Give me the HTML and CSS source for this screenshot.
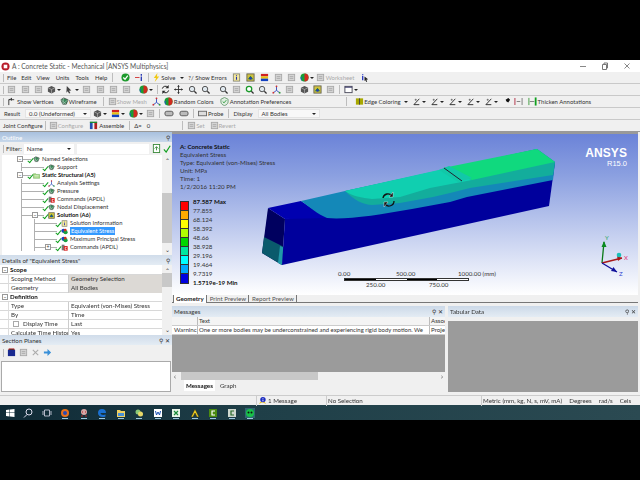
FILE: index.html
```html
<!DOCTYPE html>
<html lang="en">
<head>
<meta charset="utf-8">
<title>A : Concrete Static - Mechanical [ANSYS Multiphysics]</title>
<link rel="stylesheet" href="styles.css">
</head>
<body>
<svg class="defs" width="0" height="0">
  <symbol id="check" viewBox="0 0 10 10"><circle cx="5" cy="5" r="4.500" fill="#1c9a2c"/><path d="M2.500 5l2 2 3-4" stroke="#fff" stroke-width="1.400" fill="none"/></symbol>
  <symbol id="cube" viewBox="0 0 10 10"><path d="M5 1l4 2v4.500l-4 2-4-2V3z" fill="#555"/><path d="M1 3l4 2 4-2M5 5v4.500" stroke="#ccc" stroke-width=".6" fill="none"/></symbol>
  <symbol id="gray" viewBox="0 0 10 10"><rect x="1.500" y="1.500" width="7" height="7" fill="#d4d4d4" stroke="#a8a8a8"/><path d="M3 4h4M3 6h4" stroke="#999" stroke-width=".7"/></symbol>
  <symbol id="mag" viewBox="0 0 10 10"><circle cx="4.500" cy="4.500" r="3" fill="#dfe8ee" stroke="#444"/><path d="M7 7l2.500 2.500" stroke="#333" stroke-width="1.400"/></symbol>
  <symbol id="magg" viewBox="0 0 10 10"><circle cx="4.500" cy="4.500" r="3" fill="#fff" stroke="#1a9a2a" stroke-width="1.400"/><path d="M7 7l2.500 2.500" stroke="#333" stroke-width="1.400"/></symbol>
  <symbol id="rot" viewBox="0 0 10 10"><path d="M1.500 4a3.500 3.500 0 0 1 6-1.500M8.500 6a3.500 3.500 0 0 1-6 1.500" stroke="#222" stroke-width="1.100" fill="none"/><path d="M8.500 0v3.500H5M1.500 10V6.500H5" fill="#222"/></symbol>
  <symbol id="move" viewBox="0 0 10 10"><path d="M5 .5v9M.5 5h9" stroke="#333"/><path d="M5 0l1.500 2h-3zM5 10l1.500-2h-3zM0 5l2-1.500v3zM10 5l-2-1.500v3z" fill="#333"/></symbol>
  <symbol id="color" viewBox="0 0 10 10"><path d="M1 1h8v2.700H1z" fill="#d02020"/><path d="M1 3.700h8v2.600H1z" fill="#e8c010"/><path d="M1 6.300h8V9H1z" fill="#1040c0"/></symbol>
  <symbol id="ball" viewBox="0 0 10 10"><circle cx="5" cy="5" r="4.500" fill="#18a030"/><path d="M5 .5a4.500 4.500 0 0 1 0 9z" fill="#d02a20"/><path d="M5 3a2 2 0 0 0 0 6.500A4.500 4.500 0 0 1 .6 5z" fill="#2050d0"/></symbol>
  <symbol id="edge" viewBox="0 0 10 10"><path d="M1 8.500L7 2M1 8.500h6" stroke="#222" fill="none"/><circle cx="3" cy="3" r="1.100" fill="#777"/></symbol>
  <symbol id="mesh" viewBox="0 0 10 10"><path d="M1 3l3-2 5 2-2 5H3z" fill="#3a8a5a" stroke="#222" stroke-width=".6"/><path d="M4 1l-1 7M1 3l6 5M9 3L3 8" stroke="#ddd" stroke-width=".5"/></symbol>
  <symbol id="star" viewBox="0 0 10 10"><path d="M5 1v5M5 6L1 9M5 6l4 3" stroke="#2a4ac0"/><circle cx="5" cy="1.500" r="1" fill="#d03030"/><circle cx="1.500" cy="8.500" r="1" fill="#d03030"/><circle cx="8.500" cy="8.500" r="1" fill="#2a9a30"/></symbol>
  <symbol id="tree-ok" viewBox="0 0 10 10"><path d="M1 6l2.500 3L8 2" stroke="#12a020" stroke-width="1.300" fill="none"/></symbol>
  <symbol id="sol" viewBox="0 0 10 10"><rect x="1" y="1" width="8" height="8" fill="#d0c040" stroke="#665"/><path d="M2 7l3-4 3 4z" fill="#208030"/><circle cx="5" cy="6" r="1.500" fill="#2040b0"/></symbol>
  <symbol id="folder" viewBox="0 0 10 10"><path d="M.5 2.500h3.500l1 1h4.500V9H.500z" fill="#a6d884" stroke="#5a9a40" stroke-width=".6"/><path d="M2 5h6M2 7h6" stroke="#fff" stroke-width=".6"/></symbol>
  <symbol id="cmd" viewBox="0 0 10 10"><rect x="1" y="1" width="4" height="8" fill="#777"/><rect x="4" y="3" width="5.500" height="6.500" fill="#d81818"/><path d="M8 5H6v3h2" stroke="#fff" fill="none"/></symbol>
  <symbol id="stress" viewBox="0 0 10 10"><circle cx="3.500" cy="4" r="3" fill="#1840c0"/><circle cx="6.500" cy="6" r="3" fill="#18a040"/><circle cx="6" cy="3" r="2" fill="#d03020"/></symbol>
  <symbol id="info" viewBox="0 0 10 10"><rect x="1.500" y="1" width="7" height="8" fill="#f4e89a" stroke="#887"/><path d="M5 2.500v1M5 4.500v3" stroke="#2030b0" stroke-width="1.200"/></symbol>
</svg>

<div class="screen">
  <div class="bar-black top"></div>
  <div class="window">
    <header class="titlebar">
      <svg class="app" viewBox="0 0 10 10"><circle cx="5" cy="5" r="4.500" fill="#b81c2a"/><path d="M3 3h4v4H3z" fill="#fff"/></svg>
      <span class="title">A : Concrete Static - Mechanical [ANSYS Multiphysics]</span>
      <span class="winbtns">
        <svg viewBox="0 0 8 8"><path d="M1 4.500h6" stroke="#888"/></svg>
        <svg viewBox="0 0 8 8"><path d="M1.500 2.500h4v5h-4zM3 2.500V1h3.500v5H5.500" stroke="#777" fill="none"/></svg>
        <svg viewBox="0 0 8 8"><path d="M1.500 1.500l5 5M6.500 1.500l-5 5" stroke="#888"/></svg>
      </span>
    </header>

    <div class="row menu">
      <span class="grip"></span>
      <span class="t m3">File</span><span class="t m5">Edit</span><span class="t m5">View</span><span class="t m6">Units</span><span class="t m6">Tools</span><span class="t m6">Help</span>
      <span class="sep m5"></span>
      <svg class="i m8"><use href="#check"/></svg>
      <svg class="i m5" viewBox="0 0 10 10"><path d="M0 5h5" stroke="#d03030"/><path d="M7 1v2M7 4v5" stroke="#2030b0" stroke-width="1.400"/></svg>
      <span class="sep m4"></span>
      <svg class="i m3" viewBox="0 0 10 10"><path d="M6 0L2 5.500h2.500L3 10l5-6H5.500z" fill="#f0c814"/></svg>
      <span class="t">Solve</span><span class="caret m5"></span>
      <span class="t m4">?/ Show Errors</span>
      <svg class="i m5"><use href="#info"/></svg>
      <svg class="i m5"><use href="#sol"/></svg>
      <svg class="i m5"><use href="#color"/></svg>
      <svg class="i m5"><use href="#gray"/></svg>
      <svg class="i m4"><use href="#gray"/></svg>
      <svg class="i m4"><use href="#ball"/></svg><span class="caret m1"></span>
      <svg class="i m2"><use href="#gray"/></svg>
      <span class="t dim m1">Worksheet</span>
      <svg class="i m6" viewBox="0 0 10 10"><path d="M3 1v1M3 3v5" stroke="#2030c0" stroke-width="1.400"/><path d="M5 4l4 3-2 .5 1 2-1 .5-1-2-1 1z" fill="#222"/></svg>
    </div>

    <div class="row">
      <span class="grip"></span>
      <svg class="i m3"><use href="#gray"/></svg><svg class="i m5"><use href="#gray"/></svg><svg class="i m4"><use href="#gray"/></svg>
      <svg class="i m4"><use href="#cube"/></svg><span class="caret m1"></span>
      <svg class="i m4" viewBox="0 0 10 10"><path d="M2 1l5 5-2.500.5L6 9l-1.500.5L3 7 1.500 8.500z" fill="#444"/></svg><span class="caret m1"></span>
      <svg class="i m3"><use href="#gray"/></svg><svg class="i m5"><use href="#gray"/></svg><svg class="i m4"><use href="#gray"/></svg><svg class="i m4"><use href="#gray"/></svg>
      <svg class="i m8"><use href="#ball"/></svg><span class="caret m1"></span>
      <span class="sep m4"></span>
      <svg class="i m3"><use href="#rot"/></svg><svg class="i m4"><use href="#move"/></svg><svg class="i m5"><use href="#mag"/></svg><svg class="i m4"><use href="#mag"/></svg>
      <svg class="i m9"><use href="#mag"/></svg><svg class="i m4"><use href="#gray"/></svg><svg class="i m4"><use href="#magg"/></svg><svg class="i m4"><use href="#mag"/></svg><svg class="i m5"><use href="#star"/></svg><svg class="i m4"><use href="#gray"/></svg><svg class="i m6"><use href="#cube"/></svg><svg class="i m4"><use href="#sol"/></svg><svg class="i m4"><use href="#gray"/></svg>
      <span class="sep m4"></span>
      <svg class="i m4" viewBox="0 0 10 10"><rect x="1" y="1.500" width="8" height="7" fill="#fff" stroke="#445"/><path d="M1 2.500h8" stroke="#336"/></svg><span class="caret m1"></span>
    </div>

    <div class="row">
      <span class="grip"></span>
      <svg class="i m3" viewBox="0 0 10 10"><path d="M2 9V3h6M2 3l3-1M5 1v3" stroke="#333" fill="none"/></svg><span class="t m1">Show Vertices</span>
      <svg class="i m6"><use href="#mesh"/></svg><span class="t">Wireframe</span>
      <span class="sep m6"></span>
      <svg class="i m4"><use href="#gray"/></svg><span class="t dim">Show Mesh</span>
      <svg class="i m5"><use href="#star"/></svg>
      <svg class="i m3"><use href="#ball"/></svg><span class="t m1">Random Colors</span>
      <svg class="i m6" viewBox="0 0 10 10"><path d="M5 .5l4 2v3c0 2-2 3.500-4 4-2-.5-4-2-4-4v-3z" fill="#dfeee0" stroke="#6a9a70"/><path d="M3 5l1.500 1.500L7 3.500" stroke="#2a9a3a" fill="none"/></svg><span class="t m1">Annotation Preferences</span>
      <span class="sep sep-far"></span>
      <svg class="i m4" viewBox="0 0 10 10"><path d="M1 1.500h8v7H1z" fill="#a8a800"/><path d="M5 1.500v7" stroke="#444"/></svg><span class="t">Edge Coloring</span><span class="caret m3"></span>
      <svg class="i m5"><use href="#edge"/></svg><span class="caret"></span>
      <svg class="i m5"><use href="#edge"/></svg><span class="caret"></span>
      <svg class="i m5"><use href="#edge"/></svg><span class="caret"></span>
      <svg class="i m5"><use href="#edge"/></svg><span class="caret"></span>
      <svg class="i m5"><use href="#edge"/></svg><span class="caret"></span>
      <svg class="i m4" viewBox="0 0 10 10"><path d="M1 9l4-4-1-2 3-2 2 2-2 3-2-1-4 4z" fill="#111"/></svg>
      <svg class="i m3" viewBox="0 0 10 10"><path d="M1 1v8" stroke="#c06070" stroke-width="1.400"/><path d="M9 1v8" stroke="#999" stroke-width="1.400"/><path d="M3 5h4" stroke="#777"/></svg>
      <svg class="i m5" viewBox="0 0 10 10"><path d="M1 1v8" stroke="#3a9a3a"/><path d="M8.500 .5v9" stroke="#10a020" stroke-width="2"/><path d="M2 5h5" stroke="#777"/></svg><span class="t m1">Thicken Annotations</span>
    </div>

    <div class="row">
      <span class="t m4">Result</span>
      <span class="select m5 sel-result"><span class="t">0.0 (Undeformed)</span><span class="caret"></span></span>
      <svg class="i m2"><use href="#cube"/></svg><span class="caret m1"></span>
      <svg class="i m4"><use href="#color"/></svg><span class="caret m1"></span>
      <svg class="i m4"><use href="#ball"/></svg><span class="caret m1"></span>
      <svg class="i m3"><use href="#gray"/></svg>
      <span class="sep m4"></span>
      <svg class="i wide m4" viewBox="0 0 10 10"><rect x=".5" y="2.500" width="9" height="5" rx="2" fill="#bbb" stroke="#555"/></svg>
      <svg class="i wide m5" viewBox="0 0 10 10"><rect x=".5" y="2.500" width="9" height="5" rx="2" fill="#bbb" stroke="#555"/></svg>
      <span class="sep m4"></span>
      <svg class="i m4" viewBox="0 0 10 10"><rect x=".5" y="2.500" width="9" height="5" fill="#ddd" stroke="#666"/></svg><span class="t m1">Probe</span>
      <span class="sep m5"></span>
      <span class="t m4">Display</span>
      <span class="select m5 sel-display"><span class="t">All Bodies</span><span class="caret"></span></span>
    </div>

    <div class="row last">
      <span class="t m3">Joint Configure</span>
      <span class="sep m2"></span>
      <svg class="i m3"><use href="#gray"/></svg><span class="t dim">Configure</span>
      <svg class="i m6" viewBox="0 0 10 10"><rect x="1" y="1" width="3" height="8" fill="#2050b0"/><rect x="6" y="1" width="3" height="8" fill="#b02020"/><path d="M1 1.500h8" stroke="#1a8a30" stroke-width="1.500"/></svg><span class="t m1">Assemble</span>
      <span class="sep m5"></span>
      <span class="t m4">Δ=</span><span class="t m5">0</span>
      <span class="sep sep-joint"></span>
      <svg class="i m4"><use href="#gray"/></svg><span class="t dim">Set</span>
      <svg class="i m5"><use href="#gray"/></svg><span class="t dim">Revert</span>
    </div>

    <main class="workspace">
      <aside class="left">
        <div class="panelhead outlinehead"><span>Outline</span><span class="pin">⚲</span></div>
        <div class="filter">
          <span class="t fl">Filter:</span>
          <span class="select sel-filter"><span class="t">Name</span><span class="caret"></span></span>
          <span class="filterinput"></span>
          <svg class="i m3" viewBox="0 0 10 10"><rect x="1.500" y=".5" width="7" height="9" fill="#fff" stroke="#3a8a3a"/><path d="M3 5l2-2 2 2M5 3v4" stroke="#3a8a3a" fill="none"/></svg>
          <svg class="i m2"><use href="#tree-ok"/></svg>
        </div>
        <div class="treewrap">
          <ul class="tree">
            <li class="node"><span class="exp">−</span><svg class="ti"><use href="#mesh"/></svg><span class="t">Named Selections</span></li>
            <li><ul>
              <li class="node"><svg class="ti"><use href="#mesh"/></svg><span class="t">Support</span></li>
            </ul></li>
            <li class="node"><span class="exp">−</span><svg class="ti"><use href="#folder"/></svg><span class="t b">Static Structural (A5)</span></li>
            <li><ul>
              <li class="node"><svg class="ti"><use href="#star"/></svg><span class="t">Analysis Settings</span></li>
              <li class="node"><svg class="ti"><use href="#mesh"/></svg><span class="t">Pressure</span></li>
              <li class="node"><svg class="ti"><use href="#cmd"/></svg><span class="t">Commands (APDL)</span></li>
              <li class="node"><svg class="ti"><use href="#mesh"/></svg><span class="t">Nodal Displacement</span></li>
              <li class="node"><span class="exp">−</span><svg class="ti"><use href="#sol"/></svg><span class="t b">Solution (A6)</span></li>
              <li><ul>
                <li class="node"><svg class="ti"><use href="#info"/></svg><span class="t">Solution Information</span></li>
                <li class="node"><svg class="ti"><use href="#stress"/></svg><span class="t sel">Equivalent Stress</span></li>
                <li class="node"><svg class="ti"><use href="#stress"/></svg><span class="t">Maximum Principal Stress</span></li>
                <li class="node"><span class="exp">+</span><svg class="ti"><use href="#cmd"/></svg><span class="t">Commands (APDL)</span></li>
              </ul></li>
            </ul></li>
          </ul>
          <div class="scroll"><span class="up">⌃</span><span class="thumb outline-thumb"></span><span class="dn">⌄</span></div>
        </div>

        <div class="panelhead"><span>Details of "Equivalent Stress"</span><span class="pin">⚲</span></div>
        <div class="detailswrap">
          <div class="details">
            <div class="dr group"><span class="exp">−</span><span class="t b">Scope</span></div>
            <div class="dr"><span class="k t">Scoping Method</span><span class="v t shade">Geometry Selection</span></div>
            <div class="dr"><span class="k t">Geometry</span><span class="v t shade">All Bodies</span></div>
            <div class="dr group"><span class="exp">−</span><span class="t b">Definition</span></div>
            <div class="dr"><span class="k t">Type</span><span class="v t">Equivalent (von-Mises) Stress</span></div>
            <div class="dr"><span class="k t">By</span><span class="v t">Time</span></div>
            <div class="dr"><span class="k t"><span class="box"></span>Display Time</span><span class="v t">Last</span></div>
            <div class="dr"><span class="k t">Calculate Time History</span><span class="v t">Yes</span></div>
          </div>
          <div class="scroll"><span class="up">⌃</span><span class="thumb details-thumb"></span><span class="dn">⌄</span></div>
        </div>

        <div class="panelhead"><span>Section Planes</span><span class="pin">⚲ ✕</span></div>
        <div class="sectiontools">
          <span class="grip"></span>
          <svg class="i m3" viewBox="0 0 10 10"><rect x="1" y="2" width="8" height="7" fill="#1a2a90"/><path d="M2 2V1h6v1" stroke="#c03030"/></svg>
          <svg class="i m3"><use href="#gray"/></svg>
          <svg class="i m3" viewBox="0 0 10 10"><path d="M2 2l6 6M8 2l-6 6" stroke="#aaa" stroke-width="1.200"/></svg>
          <svg class="i m3" viewBox="0 0 10 10"><path d="M1 4h4V1l4 4-4 4V6H1z" fill="#3a90d8"/></svg>
        </div>
        <div class="sectionlist"></div>
      </aside>

      <section class="right">
        <div class="viewport">
          <svg class="model" viewBox="172 132 466 163">
            <polygon points="268,208 285,219 282,265 262,253" fill="#00005f"/>
            <polygon points="264,237 284,247 282,265 262,253" fill="#0a5a6c"/>
            <polygon points="280,246 285,248 282,265 278,263" fill="#2098a8"/>
            <polygon points="285,219 555,162 549,206 282,265" fill="#00009c"/>
            <polygon points="268,208 301,201 319,213 327,218 285,219" fill="#0000b0"/>
            <path d="M301 201L345 191L443 170L537 149L555 162L553 180L467 197L450 202L412 209C379 215 345 220 327 218C317 214 310 207 301 201Z" fill="#1488b8"/>
            <path d="M345 191L537 149L555 162L553 175L470 188L450 193L433 197L400 203L372 205C364 205 354 200 345 191Z" fill="#13ad9c"/>
            <path d="M345 191L443 169L472 180L430 188L400 197L372 199C362 198 352 196 345 191Z" fill="#10cfb0"/>
            <polygon points="443,168 537,149 555,162 472,180" fill="#10d97e"/>
            <polygon points="439,170 449,166 472,178 458,182" fill="#12c8a8"/>
            <path d="M444 168L462 181" stroke="#223" stroke-width="1"/>
            <g fill="none" stroke-width="1.300">
              <path d="M383 198a5 5 0 0 1 9-2" stroke="#111"/>
              <path d="M394 201a5 5 0 0 1-9 3" stroke="#111"/>
            </g>
            <path d="M393 192v5h-4zM384 207v-5h4z" fill="#111" stroke="#fff" stroke-width=".4"/>
            <path d="M602 263L604 242" stroke="#0a7a18" stroke-width="1.300"/><path d="M604 241l-2.500 6h5z" fill="#0a8a20"/>
            <path d="M602 263L622 258" stroke="#a81818" stroke-width="1.300"/><path d="M622 258l-5-2 1 5z" fill="#a81818"/>
            <path d="M602 263L617 272" stroke="#10109a" stroke-width="1.300"/><path d="M617 272l-6-1 2.500-4z" fill="#10109a"/>
            <circle cx="619" cy="255" r="2.300" fill="#18c0b8"/>
          </svg>
          <div class="vtext">
            <div class="t b">A: Concrete Static</div>
            <div class="t">Equivalent Stress</div>
            <div class="t">Type: Equivalent (von-Mises) Stress</div>
            <div class="t">Unit: MPa</div>
            <div class="t">Time: 1</div>
            <div class="t">1/2/2016 11:20 PM</div>
          </div>
          <div class="legend">
            <div class="lr"><i class="c1"></i></div>
            <div class="lr"><i class="c2"></i></div>
            <div class="lr"><i class="c3"></i></div>
            <div class="lr"><i class="c4"></i></div>
            <div class="lr"><i class="c5"></i></div>
            <div class="lr"><i class="c6"></i></div>
            <div class="lr"><i class="c7"></i></div>
            <div class="lr"><i class="c8"></i></div>
            <div class="lr"><i class="c9"></i></div>
          </div>
          <div class="labels">
            <div class="t b">87.587 Max</div><div class="t">77.855</div><div class="t">68.124</div><div class="t">58.392</div><div class="t">48.66</div><div class="t">38.928</div><div class="t">29.196</div><div class="t">19.464</div><div class="t">9.7319</div><div class="t b">1.5719e-19 Min</div>
          </div>
          <div class="brand"><div class="ansys">ANSYS</div><div class="rel">R15.0</div></div>
          <div class="scalebar">
            <div class="st"><span class="t s0">0.00</span><span class="t s500">500.00</span><span class="t s1000">1000.00 (mm)</span></div>
            <div class="sb"><i></i><b></b><i></i><b></b></div>
            <div class="st"><span class="t s250">250.00</span><span class="t s750">750.00</span></div>
          </div>
          <span class="axis ay">Y</span><span class="axis ax">X</span><span class="axis az">Z</span>
        </div>
        <div class="vtabs"><span class="vt on t">Geometry</span><span class="vt t">Print Preview</span><span class="vt t">Report Preview</span></div>
        <div class="lower">
          <div class="messages">
            <div class="panelhead mh"><span>Messages</span><span class="pin">⚲ ✕</span></div>
            <div class="mt head"><span class="c0"></span><span class="c-text t">Text</span><span class="c-assoc t">Assoc</span></div>
            <div class="mt"><span class="c0 t">Warninc</span><span class="c-text t">One or more bodies may be underconstrained and experiencing rigid body motion. We</span><span class="c-assoc t">Proje</span></div>
            <div class="grayarea"></div>
            <div class="hscroll"><span class="hl">‹</span><span class="hthumb"></span><span class="hr">›</span></div>
            <div class="mtabs"><span class="mtab on t">Messages</span><span class="mtab t">Graph</span></div>
          </div>
          <div class="tabular">
            <div class="panelhead mh"><span>Tabular Data</span><span class="pin">⚲ ✕</span></div>
            <div class="tabspace"></div>
            <div class="grayarea"></div>
          </div>
        </div>
      </section>
    </main>

    <footer class="status">
      <span class="cell c-a"></span>
      <span class="cell c-b"><svg class="i" viewBox="0 0 10 10"><path d="M1 9l4-2 4 2-2-3H3z" fill="#e8c020"/><circle cx="5.500" cy="4" r="3" fill="#1a2ac0"/><path d="M5.500 2.500v.8M5.500 4v2" stroke="#fff"/></svg><span class="t">1 Message</span></span>
      <span class="cell c-c t">No Selection</span>
      <span class="cell c-d"><span class="t">Metric (mm, kg, N, s, mV, mA)</span><span class="t">Degrees</span><span class="t">rad/s</span><span class="t">Cels</span></span>
    </footer>
  </div>

  <nav class="taskbar">
    <svg class="tb" viewBox="0 0 10 10"><path d="M1 2l3.500-.5v3H1zM5 1.400L9.500 1v3.500H5zM1 5h3.500v3.500L1 8zM5 5h4.500v4L5 8.600z" fill="#fff"/></svg>
    <svg class="tb" viewBox="0 0 10 10"><circle cx="6" cy="4" r="3" fill="none" stroke="#dde"/><path d="M4 6.500L1 9.500" stroke="#dde"/></svg>
    <svg class="tb" viewBox="0 0 10 10"><path d="M2.500 2h5v6h-5zM1 3v4M9 3v4" stroke="#dde" fill="none" stroke-width=".8"/></svg>
    <svg class="tb on" viewBox="0 0 10 10"><circle cx="5" cy="5" r="4" fill="#e8701a"/><circle cx="5" cy="5" r="2" fill="#2a4ab0"/></svg>
    <svg class="tb on" viewBox="0 0 10 10"><circle cx="5" cy="4" r="3" fill="#d8a8a8"/><path d="M3 4h1M6 4h1M3 7v2M7 7v2" stroke="#b02020"/></svg>
    <svg class="tb on" viewBox="0 0 10 10"><path d="M1 5a4 4 0 0 1 8 0H3.500c0 2 3 2.500 5 1.500V8.500C5 10 1 8.500 1 5z" fill="#1a70d0"/></svg>
    <svg class="tb on" viewBox="0 0 10 10"><path d="M1 2h3l1 1h4v6H1z" fill="#f0d060"/><path d="M2 5h6v3H2z" fill="#4a90d8"/></svg>
    <svg class="tb on" viewBox="0 0 10 10"><circle cx="4" cy="4" r="2.500" fill="#8ac878"/><circle cx="6.500" cy="6" r="2.500" fill="#e8d868"/></svg>
    <svg class="tb on" viewBox="0 0 10 10"><rect x="1" y="1" width="8" height="8" fill="#fff"/><path d="M2.500 3l1 4L5 4l1.500 3 1-4" stroke="#1a50b0" fill="none"/></svg>
    <svg class="tb on" viewBox="0 0 10 10"><rect x="1" y="1" width="8" height="8" fill="#e8f4e8"/><path d="M3 3l4 4M7 3L3 7" stroke="#1a8a3a" stroke-width="1.200"/></svg>
    <svg class="tb on" viewBox="0 0 10 10"><path d="M5 1L1 9h2l2-4 2 4h2z" fill="#f0d020" stroke="#111" stroke-width=".4"/></svg>
    <svg class="tb on" viewBox="0 0 10 10"><rect x="1" y="1" width="8" height="8" fill="#4a8a10"/><path d="M7 3H4v4h3" stroke="#fff" fill="none" stroke-width="1.200"/></svg>
    <svg class="tb on" viewBox="0 0 10 10"><rect x="1" y="1" width="8" height="8" fill="#cfd8cf"/><path d="M7 3H4v4h3" stroke="#2a6a2a" fill="none" stroke-width="1.200"/></svg>
    <svg class="tb on active" viewBox="0 0 10 10"><circle cx="5" cy="5" r="4" fill="#18c048"/><circle cx="3.500" cy="4.500" r="1" fill="#111"/><circle cx="6.500" cy="4.500" r="1" fill="#111"/></svg>
  </nav>
  <div class="bar-black bottom"></div>
</div>
</body>
</html>
```

FILE: styles.css
```css
* { box-sizing: border-box; }
html, body { margin: 0; padding: 0; background: #000; overflow: hidden; }
ul { list-style: none; margin: 0; padding: 0; }
.defs { position: absolute; }
.screen { width: 640px; height: 480px; display: flex; flex-direction: column; font-family: Lato, "Liberation Sans", sans-serif; font-size: 6.2px; color: #333; }
.t { white-space: nowrap; line-height: 8px; }
.b { font-weight: 700; color: #111; }
.dim { color: #aaa; }
.bar-black { background: #000; flex: none; }
.top { height: 60px; }
.bottom { height: 60px; }
.window { height: 345px; background: #f0f0f0; display: flex; flex-direction: column; filter: blur(.35px); }

.titlebar { height: 12px; background: #fff; display: flex; align-items: center; padding-left: 1px; }
.app { width: 9px; height: 9px; }
.title { margin-left: 2px; font-size: 6.6px; color: #555; white-space: nowrap; }
.winbtns { margin-left: auto; display: flex; gap: 14px; padding-right: 9px; }
.winbtns svg { width: 8px; height: 8px; }

.row { height: 12px; display: flex; align-items: center; border-bottom: 1px solid #c9c9c9; background: #f0f0f0; flex: none; font-size: 5.95px; }
.row.last { border-bottom: 1px solid #999; }
.grip { width: 1px; height: 8px; background: #bbb; margin-left: 3px; flex: none; }
.i { width: 9px; height: 9px; flex: none; }
.i.wide { width: 10px; }
.sep { width: 1px; height: 9px; background: #bdbdbd; flex: none; }
.sep-far { margin-left: 55px; margin-right: 4px; }
.sep-joint { margin-left: 32px; }
.caret { width: 0; height: 0; border-left: 2px solid transparent; border-right: 2px solid transparent; border-top: 2px solid #222; flex: none; }
.m1 { margin-left: 1px; } .m2 { margin-left: 2px; } .m3 { margin-left: 3px; } .m4 { margin-left: 4px; }
.m5 { margin-left: 5px; } .m6 { margin-left: 6px; } .m8 { margin-left: 8px; } .m9 { margin-left: 9px; }

.select { height: 9px; display: flex; align-items: center; justify-content: space-between; padding: 0 3px; flex: none; }
.sel-result { width: 66px; background: #f8f8f8; border: 1px solid #e4e4e4; }
.sel-display { width: 62px; background: #f8f8f8; border: 1px solid #e4e4e4; }
.sel-filter { width: 50px; background: #fff; margin-left: 2px; height: 10px; }

.workspace { flex: 1; display: flex; min-height: 0; }
.left { width: 172px; flex: none; display: flex; flex-direction: column; }
.right { flex: 1; display: flex; flex-direction: column; min-width: 0; padding-right: 2px; }

.panelhead { height: 10px; flex: none; display: flex; justify-content: space-between; align-items: center; padding: 0 2px; color: #fff; background: linear-gradient(#a8c0de, #c8d8ea); }
.left > .panelhead:not(.outlinehead) { color: #333; background: linear-gradient(#d0dcea, #e4ecf4); }
.pin { color: #333; font-size: 6px; }

.filter { height: 13px; flex: none; display: flex; align-items: center; padding: 0 2px; background: #f0f0f0; }
.fl { margin-left: 1px; border-left: 1px solid #bbb; padding-left: 2px; }
.filterinput { width: 72px; height: 10px; background: #fff; margin-left: 3px; flex: none; }

.treewrap { height: 100px; flex: none; display: flex; background: #fff; margin-left: 2px; overflow: hidden; }
.tree { flex: 1; padding-left: 19px; min-width: 0; font-size: 5.8px; }
.tree ul { padding-left: 14px; border-left: 1px solid #b0b0b0; }
.tree ul ul { margin-left: -2px; }
.node { height: 8px; display: flex; align-items: center; position: relative; margin-left: 3px; }
.node::before { content: ""; position: absolute; left: -1px; top: 4px; width: 8px; height: 1px; background: #b0b0b0; }
.tree ul .node::before { left: -17px; width: 22px; }
.node::after { content: ""; position: absolute; left: 5px; top: 2px; width: 2px; height: 5px; border-right: 1px solid #12a020; border-bottom: 1px solid #12a020; transform: rotate(40deg); }
.exp { position: absolute; z-index: 1; left: -7px; top: 1px; width: 6px; height: 6px; border: 1px solid #999; background: #fff; font-size: 5px; line-height: 4px; text-align: center; color: #333; }
.ti { width: 7px; height: 7px; flex: none; margin: 0 2px 0 9px; position: relative; z-index: 1; }
.sel { background: #3399ff; color: #fff; padding: 0 1px; }
.scroll { width: 10px; margin-left: auto; flex: none; background: #f0f0f0; display: flex; flex-direction: column; align-items: center; font-size: 6px; color: #333; }
.up { height: 8px; line-height: 11px; flex: none; }
.dn { height: 8px; line-height: 5px; margin-top: auto; flex: none; }
.thumb { width: 10px; background: #c8c8c8; display: block; flex: none; }
.outline-thumb { height: 50px; margin-top: 30px; }
.details-thumb { height: 14px; }

.detailswrap { height: 70px; flex: none; display: flex; overflow: hidden; background: #fff; }
.details { flex: 1; min-width: 0; padding-top: 1px; }
.dr { height: 9px; display: flex; align-items: center; border-bottom: 1px solid #d8d8d8; position: relative; }
.dr.group { padding-left: 10px; }
.dr.group .exp { left: 2px; top: 1px; }
.k { height: 9px; flex: none; line-height: 8px; border-left: 1px solid #ddd; margin-left: 8px; width: 61px; padding-left: 2px; border-right: 1px solid #ccc; overflow: hidden; display: flex; align-items: center; }
.v { flex: 1; height: 9px; padding-left: 2px; line-height: 8px; }
.shade { background: #dcd9d5; }
.box { width: 6px; height: 6px; border: 1px solid #aaa; background: #fff; margin: 0 4px 0 2px; flex: none; }

.sectiontools { height: 15px; flex: none; display: flex; align-items: center; }
.sectionlist { height: 31px; flex: none; background: #fff; border: 1px solid #aaa; margin: 1px 1px 0 1px; }

.viewport { height: 163px; flex: none; position: relative; background: linear-gradient(#6b83d8, #8a9fe0 25%, #fff); border-top: 2px solid #999; overflow: hidden; }
.model { position: absolute; left: 0; top: -2px; width: 466px; height: 163px; }
.vtext { position: absolute; left: 8px; top: 9px; }
.legend { position: absolute; left: 8px; top: 67px; width: 9px; border: 1px solid #333; }
.lr { height: 9px; }
.lr i { display: block; height: 100%; border-bottom: 1px solid #333; }
.lr:last-child i { border-bottom: 0; }
.c1 { background: #ff0000; } .c2 { background: #ffaa00; } .c3 { background: #ffff00; } .c4 { background: #b0ff00; }
.c5 { background: #00d800; } .c6 { background: #00e8a0; } .c7 { background: #00ffff; } .c8 { background: #00aaff; } .c9 { background: #0000e0; }
.labels { position: absolute; left: 21px; top: 64px; }
.labels div { height: 9px; line-height: 8px; }
.brand { position: absolute; right: 11px; top: 13px; text-align: right; color: #fff; line-height: 1; }
.ansys { font-family: "Liberation Sans", sans-serif; font-size: 12px; font-weight: 700; letter-spacing: .1px; }
.rel { font-family: "Liberation Sans", sans-serif; font-size: 7.5px; margin-top: 1px; }
.scalebar { position: absolute; left: 166px; top: 136px; width: 160px; }
.st { height: 8px; position: relative; }
.st .t { position: absolute; top: 0; }
.s0 { left: 0; } .s500 { left: 58px; } .s1000 { left: 120px; } .s250 { left: 28px; } .s750 { left: 91px; }
.sb { display: flex; margin-left: 6px; width: 125px; height: 3px; border: 1px solid #333; background: #fff; }
.sb i, .sb b { flex: 1; display: block; }
.sb i { background: #000; }
.axis { position: absolute; font-size: 6px; }
.ay { left: 433px; top: 100px; color: #30a860; }
.ax { left: 452px; top: 120px; color: #e03070; }
.az { left: 447px; top: 136px; color: #3040d0; }

.vtabs { height: 8px; flex: none; display: flex; align-items: center; background: #f0f0f0; border-bottom: 1px solid #777; padding-left: 1px; }
.vt { padding: 0 2px; margin-right: 1px; border-right: 1px solid #777; color: #555; }
.vt.on { font-weight: 700; color: #222; background: #fff; border-left: 1px solid #777; }

.lower { flex: 1; display: flex; min-height: 0; padding-top: 2px; gap: 3px; }
.messages { width: 273px; flex: none; display: flex; flex-direction: column; }
.tabular { flex: 1; display: flex; flex-direction: column; }
.mh { height: 11px; margin-top: 1px; color: #333; background: linear-gradient(#ccd9e8, #e4ecf4); }
.mt { height: 9px; flex: none; display: flex; align-items: center; background: #fff; border-bottom: 1px solid #ccc; overflow: hidden; }
.mt.head { background: #f4f4f4; }
.c0 { width: 26px; padding-left: 2px; flex: none; border-right: 1px solid #bbb; overflow: hidden; height: 8px; }
.c-text { width: 232px; padding-left: 1px; flex: none; border-right: 1px solid #bbb; overflow: hidden; font-size: 5.95px; }
.c-assoc { padding-left: 1px; overflow: hidden; flex: 1; min-width: 0; }
.grayarea { flex: 1; background: #9b9b9b; min-height: 0; }
.hscroll { height: 8px; flex: none; background: #f0f0f0; display: flex; align-items: center; font-size: 7px; padding: 0 2px; }
.hl { width: 7px; }
.hthumb { width: 137px; height: 8px; background: #c8c8c8; }
.hr { margin-left: auto; }
.mtabs { height: 15px; flex: none; display: flex; align-items: flex-start; padding: 0 0 4px 12px; background: #f0f0f0; gap: 1px; }
.mtab { height: 11px; line-height: 11px; padding: 0 1px; margin-right: 3px; }
.mtab.on { font-weight: 700; color: #111; padding: 0 2px; background: #fff; }
.tabspace { height: 4px; flex: none; background: #f0f0f0; }
.tabular .grayarea { margin-bottom: 3px; }

.status { height: 10px; flex: none; display: flex; align-items: center; background: #f0f0f0; border-top: 1px solid #ccc; }
.cell { height: 10px; display: flex; align-items: center; border-right: 1px solid #ccc; }
.c-a { width: 257px; }
.c-b { width: 70px; gap: 1px; padding-left: 1px; }
.c-c { width: 155px; padding-left: 1px; }
.c-d { flex: 1; gap: 7px; padding-left: 1px; border-right: 0; }

.taskbar { height: 15px; flex: none; display: flex; align-items: center; background: linear-gradient(90deg, #0f2a36, #1f3f48 40%, #2b4a52); padding-left: 4.500px; gap: 8.500px; }
.tb { width: 10px; height: 10px; flex: none; }
.tb.on { box-shadow: 0 3px 0 -2px #9fc8e0; }
.tb.active { background: #2f6870; }
```
